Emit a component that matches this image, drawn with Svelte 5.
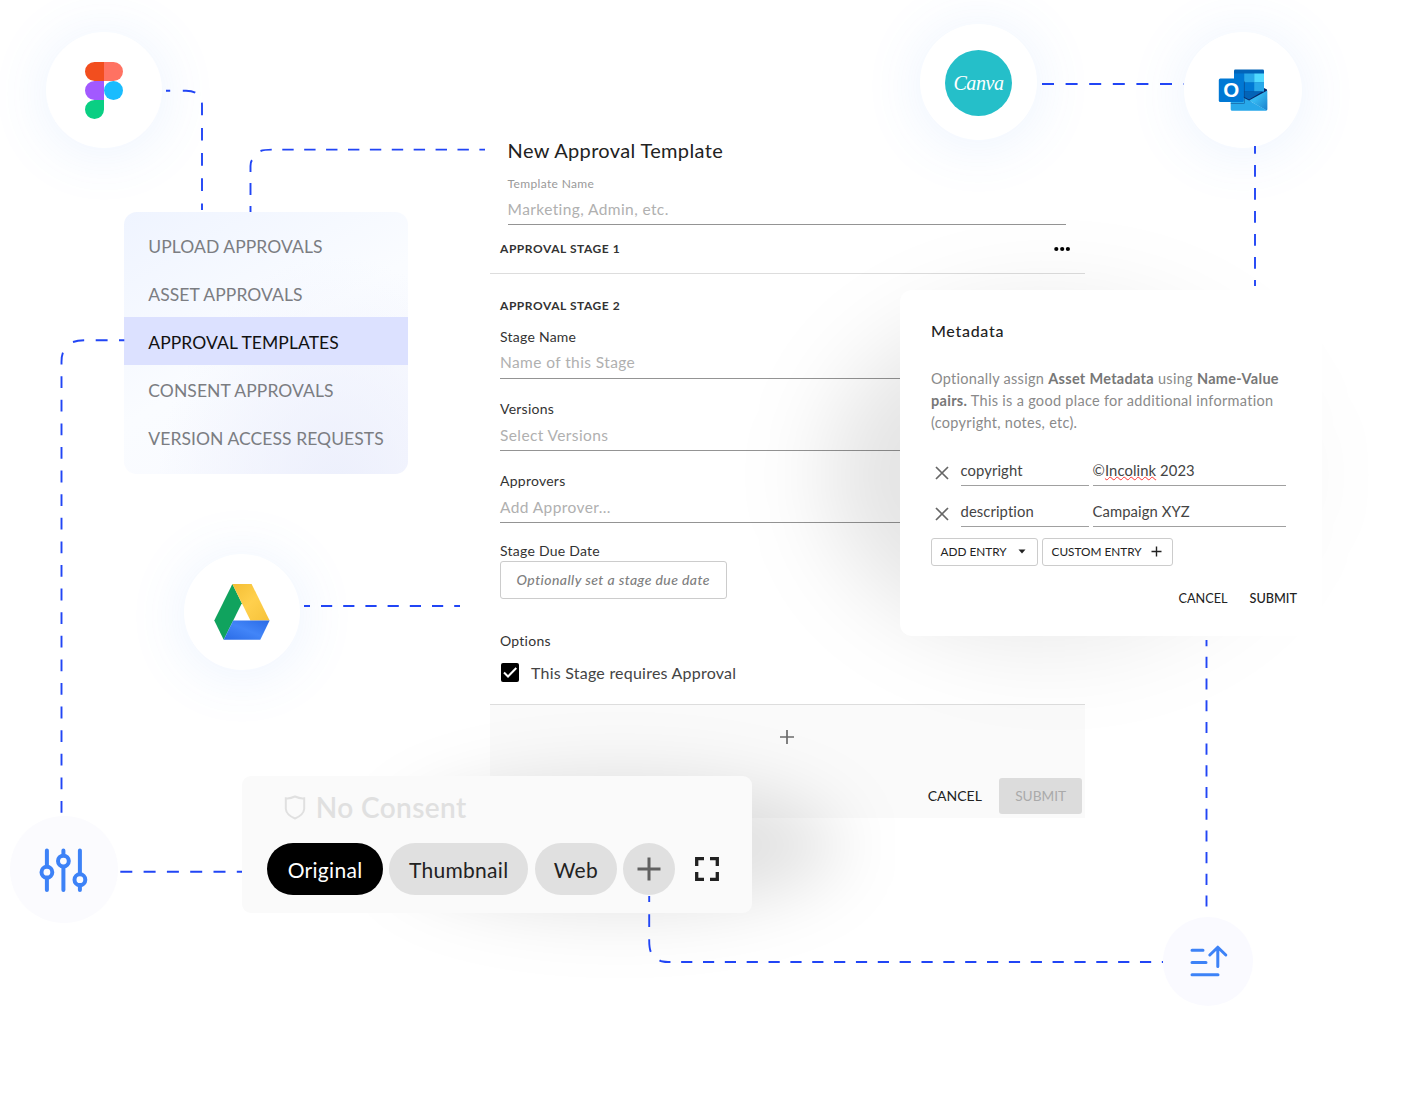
<script>
  const menu = [
    { label: 'UPLOAD APPROVALS' },
    { label: 'ASSET APPROVALS' },
    { label: 'APPROVAL TEMPLATES', active: true },
    { label: 'CONSENT APPROVALS' },
    { label: 'VERSION ACCESS REQUESTS' }
  ]

  const fields = [
    { label: 'Stage Name', hint: 'Name of this Stage' },
    { label: 'Versions', hint: 'Select Versions' },
    { label: 'Approvers', hint: 'Add Approver...' }
  ]

  // dashed lines between the nodes
  const lines = [
    { d: 'M202 210 V105 Q202 91 186 90.8 H166', dash: '12.6 12.6', offset: 6.1 },
    { d: 'M250.5 212 V166 Q250.5 162 252 160', dash: '12 11', offset: 6 },
    { d: 'M260.5 151 Q264 149.6 272 149.6 H485', dash: '11.4 10.5', offset: 0 },
    { d: 'M61.5 812.8 V362 Q61.5 354 64 350.5', dash: '11.8 11.8', offset: 0 },
    { d: 'M124.3 340.3 H86 Q78 340.3 73 342', dash: '11.9 11.4', offset: 6.6 },
    { d: 'M1042 84 H1184', dash: '12 11.6', offset: 0 },
    { d: 'M1255 146 V286', dash: '11.7 11.3', offset: 4 },
    { d: 'M1206.5 640 V908', dash: '11.1 10.6', offset: 4.9 },
    { d: 'M304 606 H460', dash: '11.2 11', offset: 5.2 },
    { d: 'M120.3 871.8 H242', dash: '12 11.3', offset: 0 },
    { d: 'M649.2 896 V940 Q649.2 948 650.8 952', dash: '12.7 12.3', offset: 6.7 },
    { d: 'M659.5 960.4 Q662 962 668 962 H1163', dash: '11.2 10.65', offset: 0 }
  ]
</script>

<div class="page">
  <section class="template">
    <div class="head">
      <h1>New Approval Template</h1>
      <div class="small">Template Name</div>
      <div class="input first">Marketing, Admin, etc.</div>
    </div>
    <div class="stage-one">
      <h2>APPROVAL STAGE 1</h2>
      <svg width="16" height="6" viewBox="0 0 16 6">
        <circle cx="2.3" cy="3" r="2.1" /><circle cx="8.2" cy="3" r="2.1" /><circle cx="13.9" cy="3" r="2.1" />
      </svg>
    </div>
    <div class="stage-two">
      <h2>APPROVAL STAGE 2</h2>
      {#each fields as field}
        <div class="field">
          <div class="label">{field.label}</div>
          <div class="input">{field.hint}</div>
        </div>
      {/each}
      <div class="label due">Stage Due Date</div>
      <div class="date">Optionally set a stage due date</div>
      <div class="label options">Options</div>
      <div class="check">
        <svg width="18" height="19" viewBox="0 0 18 19">
          <rect width="18" height="19" rx="2" />
          <path d="M3 9.5 L7 13.5 L15.3 5" fill="none" stroke="#fff" stroke-width="2" />
        </svg>
        <span>This Stage requires Approval</span>
      </div>
    </div>
    <div class="footer">
      <svg class="add" width="16" height="16" viewBox="0 0 16 16">
        <path d="M8 1 V15 M1 8 H15" stroke="#6c6c6c" stroke-width="1.7" />
      </svg>
      <div class="actions">
        <span>CANCEL</span>
        <span class="disabled">SUBMIT</span>
      </div>
    </div>
  </section>

  <div class="glow glow-meta"></div>
  <div class="glow glow-consent"></div>

  <div class="node figma">
    <svg width="38" height="57" viewBox="0 0 38 57">
      <path d="M19 28.5a9.5 9.5 0 1 1 19 0 9.5 9.5 0 0 1-19 0z" fill="#1abcfe" />
      <path d="M0 47.5A9.5 9.5 0 0 1 9.5 38H19v9.5a9.5 9.5 0 1 1-19 0z" fill="#0acf83" />
      <path d="M19 0v19h9.5a9.5 9.5 0 1 0 0-19H19z" fill="#ff7262" />
      <path d="M0 9.5A9.5 9.5 0 0 0 9.5 19H19V0H9.5A9.5 9.5 0 0 0 0 9.5z" fill="#f24e1e" />
      <path d="M0 28.5A9.5 9.5 0 0 0 9.5 38H19V19H9.5A9.5 9.5 0 0 0 0 28.5z" fill="#a259ff" />
    </svg>
  </div>
  <div class="node canva"><div class="canva-logo">Canva</div></div>
  <div class="node outlook">
    <svg width="50" height="42" viewBox="0 0 50 42">
      <defs>
        <linearGradient id="env" x1="0" y1="0" x2="1" y2="1">
          <stop offset="0.4" stop-color="#35b8f1" /><stop offset="1" stop-color="#1a7fcb" />
        </linearGradient>
      </defs>
      <path d="M45 18.5 L49 20.5 V23 L30 34 L12 26 V20z" fill="#0a2767" />
      <rect x="16" y="0.5" width="30" height="22" rx="1.2" fill="#0364b8" />
      <rect x="16" y="4.5" width="10.2" height="9" fill="#0078d4" />
      <rect x="26.2" y="4.5" width="10" height="9" fill="#28a8ea" />
      <rect x="36.2" y="4.5" width="9.8" height="9" fill="#50d9ff" />
      <rect x="16" y="13.5" width="10.2" height="9" fill="#0364b8" />
      <rect x="26.2" y="13.5" width="10" height="9" fill="#0078d4" />
      <rect x="36.2" y="13.5" width="9.8" height="9" fill="#28a8ea" />
      <path d="M16 22.5 H44.5 L31 30.5z" fill="#0364b8" />
      <path d="M49.3 21.5 L31 31.5 L48.5 41.5 Q49.4 41 49.4 40z" fill="url(#env)" />
      <path d="M12.7 22 L31 31.5 L48.6 41.3 Q48 41.8 47.5 41.8 H14.2 Q12.7 41.8 12.7 40.3z" fill="#28a8ea" />
      <path d="M12.7 34 H26 V12 Q27 12 27 13.5 V33.5 Q27 35 25 35 H12.7z" fill="#0a3b78" opacity="0.45" />
      <rect x="0.8" y="9.5" width="25" height="23.5" rx="1.5" fill="#0078d4" />
      <text x="13.2" y="28.3" text-anchor="middle" class="o">O</text>
    </svg>
  </div>
  <div class="node drive">
    <svg width="56" height="56" viewBox="0 0 56 56">
      <defs>
        <linearGradient id="yel" x1="0" y1="0" x2="1" y2="1">
          <stop offset="0" stop-color="#f4be35" /><stop offset="0.5" stop-color="#ffd04d" /><stop offset="1" stop-color="#f6c23b" />
        </linearGradient>
        <linearGradient id="blu" x1="0" y1="1" x2="1" y2="0">
          <stop offset="0" stop-color="#2a6be6" /><stop offset="0.5" stop-color="#4285f8" /><stop offset="1" stop-color="#2a6be6" />
        </linearGradient>
      </defs>
      <path d="M18.4 0 L27.8 19.3 L9.7 55.7 L0.3 36.4z" fill="#10a35e" />
      <path d="M18.4 0 H37.6 L55.6 36.4 H36.4z" fill="url(#yel)" />
      <path d="M19.2 36.4 H55.6 L46.3 55.7 H9.7z" fill="url(#blu)" />
    </svg>
  </div>
  <div class="node flat sliders">
    <svg width="50" height="46" viewBox="0 0 50 46" fill="none" stroke="#3d82f7" stroke-width="4" stroke-linecap="round">
      <path d="M7.9 3.5 V43 M24.4 3.5 V43 M40.9 3.5 V43" />
      <g fill="#fbfbfe"><circle cx="7.9" cy="25.2" r="5.4" /><circle cx="24.4" cy="14.1" r="5.4" /><circle cx="40.9" cy="32.7" r="5.4" /></g>
    </svg>
  </div>
  <div class="node flat sort">
    <svg width="40" height="34" viewBox="0 0 40 34" fill="none" stroke="#3d82f7" stroke-width="3" stroke-linecap="round" stroke-linejoin="round">
      <path d="M4 5.2 H15 M4 17.5 H18 M4 29.8 H30 M29.8 21.5 V2.5 M21.8 10 L29.8 2.2 L37.8 10" />
    </svg>
  </div>

  <nav class="menu">
    {#each menu as item}
      <div class="item" class:active={item.active}>{item.label}</div>
    {/each}
  </nav>

  <section class="meta">
    <h3>Metadata</h3>
    <p>
      Optionally assign <b>Asset Metadata</b> using <b>Name-Value</b><br />
      <b>pairs.</b> This is a good place for additional information<br />
      (copyright, notes, etc).
    </p>
    {#each [0, 1] as row}
      <div class="entry">
        <svg width="14" height="14" viewBox="0 0 14 14"><path d="M1 1 L13 13 M13 1 L1 13" stroke="#666" stroke-width="1.7" /></svg>
        {#if row === 0}
          <span class="key">copyright</span>
          <span class="value">©<u>Incolink</u> 2023</span>
        {:else}
          <span class="key">description</span>
          <span class="value">Campaign XYZ</span>
        {/if}
      </div>
    {/each}
    <div class="buttons">
      <span class="btn add-entry">ADD ENTRY
        <svg width="8" height="5" viewBox="0 0 8 5"><path d="M0.5 0.5 H7.5 L4 4.5z" fill="#222" /></svg>
      </span>
      <span class="btn custom">CUSTOM ENTRY
        <svg width="11" height="11" viewBox="0 0 11 11"><path d="M5.5 0.5 V10.5 M0.5 5.5 H10.5" stroke="#222" stroke-width="1.4" /></svg>
      </span>
    </div>
    <div class="meta-actions"><span>CANCEL</span><span class="strong">SUBMIT</span></div>
  </section>

  <section class="consent">
    <div class="no-consent">
      <svg width="22" height="25" viewBox="0 0 22 25"><path d="M11 1.5 Q6 3.8 1.8 3.3 V14 Q2.5 20 11 23.5 Q19.5 20 20.2 14 V3.3 Q16 3.8 11 1.5z" fill="none" stroke="#e0e0e0" stroke-width="2" /></svg>
      <span>No Consent</span>
    </div>
    <div class="chips">
      <span class="chip original">Original</span>
      <span class="chip thumb">Thumbnail</span>
      <span class="chip web">Web</span>
      <span class="chip plus">
        <svg width="24" height="24" viewBox="0 0 24 24"><path d="M12 0.5 V23.5 M0.5 12 H23.5" stroke="#616161" stroke-width="3" /></svg>
      </span>
      <svg class="full" width="24" height="24" viewBox="0 0 24 24"><path d="M1.7 9 V1.7 H9 M15 1.7 H22.3 V9 M22.3 15 V22.3 H15 M9 22.3 H1.7 V15" fill="none" stroke="#212121" stroke-width="3.3" /></svg>
    </div>
  </section>

  <svg class="lines" width="1420" height="1108" viewBox="0 0 1420 1108">
    {#each lines as line}
      <path d={line.d} stroke-dasharray={line.dash} stroke-dashoffset={line.offset} />
    {/each}
  </svg>
</div>

<style>
  :global(body) {
    background: #fff;
    overflow: hidden;
  }

  .page {
    position: relative;
    width: 1420px;
    height: 1108px;
    overflow: hidden;
    font-family: Lato, sans-serif;
    color: #222;
    white-space: nowrap;
  }

  svg {
    display: block;
    flex: none;
  }

  h1, h2, h3, p {
    margin: 0;
  }

  .lines {
    position: absolute;
    left: 0;
    top: 0;
    fill: none;
    stroke: #2145f5;
    stroke-width: 1.9;
  }

  /* round nodes */
  .node {
    position: absolute;
    display: flex;
    align-items: center;
    justify-content: center;
    width: 116px;
    height: 116px;
    border-radius: 50%;
    background: #fff;
    box-shadow: 0 4px 60px rgba(80, 145, 245, 0.12);
  }

  .figma { left: 46px; top: 32px; }
  .canva { left: 920px; top: 24px; width: 117px; }
  .outlook { left: 1184px; top: 32px; width: 118px; }
  .drive { left: 184px; top: 554px; }
  .flat { box-shadow: none; background: #fbfbfe; }
  .sliders { left: 10px; top: 816px; width: 108px; height: 107px; }
  .sort { left: 1163px; top: 917px; width: 90px; height: 89px; background: #fafaff; }

  .canva-logo {
    display: flex;
    align-items: center;
    justify-content: center;
    width: 67px;
    height: 66px;
    margin-top: 2px;
    border-radius: 50%;
    background: #25bfc9;
    color: #fff;
    font: italic 20px "Liberation Serif", serif;
    letter-spacing: -0.4px;
  }

  .o {
    font: bold 20.5px "Liberation Sans", sans-serif;
    fill: #fff;
  }

  .menu {
    position: absolute;
    left: 124.3px;
    top: 212px;
    width: 283.5px;
    height: 262px;
    box-sizing: border-box;
    padding-top: 9.4px;
    border-radius: 13px;
    background:
      radial-gradient(ellipse at 75% 110%, #eceffc 0%, rgba(240, 242, 253, 0) 60%),
      linear-gradient(150deg, #eff4ff 0%, #fafcff 50%, #f8f9ff 100%);
  }

  .item {
    height: 48px;
    line-height: 51px;
    padding-left: 24px;
    font-size: 17.5px;
    letter-spacing: 0.07px;
    color: #7b7d82;
  }

  .active {
    background: #dce1ff;
    color: #111;
  }

  /* template form */
  .template {
    position: absolute;
    left: 490px;
    top: 138px;
    width: 595px;
  }

  .head {
    padding: 0 19px 0 17.6px;
  }

  h1 {
    font-size: 20px;
    line-height: 25px;
    font-weight: 400;
    letter-spacing: 0.35px;
  }

  .small {
    margin-top: 11px;
    font-size: 12px;
    line-height: 20px;
    letter-spacing: 0.35px;
    color: #999;
  }

  .input {
    height: 31px;
    line-height: 33px;
    border-bottom: 1px solid #949494;
    font-size: 15.5px;
    letter-spacing: 0.4px;
    color: #b0b0b0;
  }

  .first {
    height: 30px;
    line-height: 31px;
  }

  h2 {
    font-size: 12px;
    line-height: 20px;
    font-weight: 700;
    letter-spacing: 0.55px;
    color: #333;
  }

  .stage-one {
    display: flex;
    align-items: center;
    justify-content: space-between;
    height: 48px;
    padding: 0 15px 0 10px;
    border-bottom: 1px solid #ddd;
  }

  .stage-two {
    height: 430px;
    box-sizing: border-box;
    padding: 22px 19px 0 10px;
  }

  .label {
    font-size: 14px;
    line-height: 20px;
    letter-spacing: 0.25px;
    color: #333;
  }

  .field { margin-top: 20px; }
  h2 + .field { margin-top: 11px; }
  h2 + .field .input { line-height: 31px; }
  .due { margin-top: 18px; }

  .date {
    width: 224.5px;
    height: 36px;
    border: 1px solid #ccc;
    border-radius: 3px;
    background: #fff;
    font-size: 14px;
    font-style: italic;
    font-weight: 500;
    letter-spacing: 0.42px;
    line-height: 35px;
    text-align: center;
    color: #808080;
  }

  .options { margin-top: 32px; }

  .check {
    display: flex;
    align-items: center;
    gap: 12px;
    margin-top: 9px;
    padding-left: 1px;
    height: 24px;
    font-size: 16px;
    letter-spacing: 0.23px;
    color: #444;
  }

  .footer {
    height: 113px;
    border-top: 1px solid #ddd;
    background: #fafafa;
  }

  .add {
    margin: 24px auto 33px;
    padding-right: 1px;
  }

  .actions {
    display: flex;
    justify-content: flex-end;
    align-items: center;
    gap: 17px;
    padding-right: 2.6px;
    font-size: 14px;
    line-height: 34px;
  }

  .disabled {
    width: 83.5px;
    height: 36px;
    border-radius: 3px;
    background: #dcdcdc;
    color: #aaa;
    font-size: 13.7px;
    line-height: 36px;
    text-align: center;
  }

  .glow {
    position: absolute;
    border-radius: 50%;
  }

  .glow-meta {
    left: 830px;
    top: 300px;
    width: 470px;
    height: 350px;
    background: linear-gradient(90deg, rgba(0, 0, 0, 0.12), rgba(0, 0, 0, 0.04));
    filter: blur(45px);
  }

  .glow-consent {
    left: 400px;
    top: 780px;
    width: 440px;
    height: 130px;
    background: rgba(0, 0, 0, 0.12);
    filter: blur(35px);
  }

  .meta {
    position: absolute;
    left: 900px;
    top: 290px;
    width: 422px;
    height: 345.5px;
    box-sizing: border-box;
    padding: 30px 25px 0 31px;
    border-radius: 12px;
    background: #fff;
  }

  h3 {
    font-size: 16px;
    line-height: 22px;
    font-weight: 500;
    letter-spacing: 0.7px;
  }

  p {
    margin: 26px 0 16px;
    font-size: 14.5px;
    line-height: 22.2px;
    letter-spacing: 0.29px;
    color: #8a8a8a;
  }

  p b {
    color: #777;
    letter-spacing: 0.3px;
  }

  .entry {
    display: flex;
    align-items: center;
    height: 41px;
    padding-left: 4px;
    font-size: 14.8px;
    letter-spacing: 0.1px;
    color: #444;
  }

  .entry svg {
    margin-top: 3px;
  }

  .key,
  .value {
    height: 29px;
    line-height: 28px;
    border-bottom: 1px solid #a0a0a0;
  }

  .key {
    width: 128.5px;
    margin: 0 3.5px 0 11.5px;
  }

  .value {
    width: 193.5px;
  }

  u {
    text-decoration: underline wavy #f33 1px;
    text-underline-offset: 0;
  }

  .buttons {
    display: flex;
    gap: 4px;
    margin-top: 5px;
  }

  .btn {
    display: flex;
    align-items: center;
    justify-content: space-between;
    box-sizing: border-box;
    height: 28.5px;
    padding: 0 10px 0 8.5px;
    border: 1px solid #ccc;
    border-radius: 3px;
    font-size: 11.8px;
  }

  .add-entry { width: 107px; padding-right: 11px; }
  .custom { width: 130.5px; }

  .meta-actions {
    display: flex;
    justify-content: flex-end;
    gap: 22px;
    margin-top: 23px;
    font-size: 12.7px;
    line-height: 18px;
  }

  .strong { font-weight: 500; }

  .consent {
    position: absolute;
    left: 242.3px;
    top: 776px;
    width: 510px;
    height: 136.5px;
    box-sizing: border-box;
    padding: 14px 0 0 25px;
    border-radius: 9px;
    background: #fafafa;
  }

  .no-consent {
    display: flex;
    align-items: center;
    gap: 9.5px;
    height: 34px;
    padding-left: 17px;
    font-size: 28px;
    font-weight: 600;
    letter-spacing: 0.4px;
    color: #e0e0e0;
  }

  .chips {
    display: flex;
    align-items: center;
    gap: 6.4px;
    margin-top: 19px;
    font-size: 21px;
    line-height: 53px;
    letter-spacing: 0.3px;
  }

  .chip {
    display: flex;
    align-items: flex-start;
    justify-content: center;
    height: 52px;
    border-radius: 26px;
    background: #e0e0e0;
  }

  .original { width: 115.5px; background: #000; color: #fff; }
  .thumb { width: 139px; }
  .web { width: 82.5px; }
  .plus { width: 52px; align-items: center; }
  .full { margin-left: 13px; }
</style>
